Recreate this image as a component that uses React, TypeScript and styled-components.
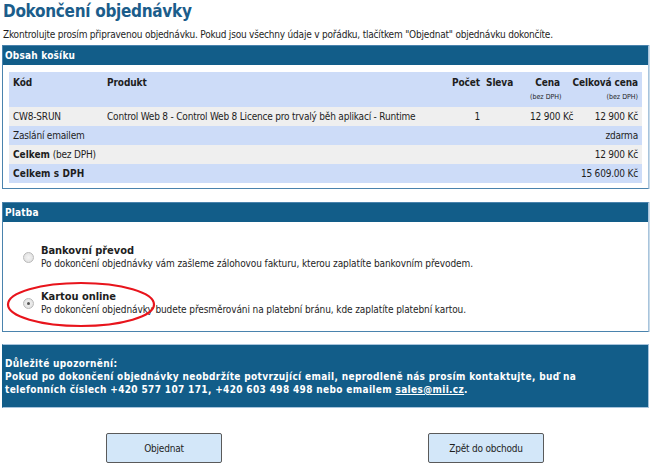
import styled, { createGlobalStyle } from "styled-components";

const GlobalStyle = createGlobalStyle`
  html, body {
    margin: 0;
    padding: 0;
    background: #ffffff;
  }
  body {
    font-family: "DejaVu Sans Condensed", "DejaVu Sans", sans-serif;
    font-size: 10px;
    letter-spacing: -0.2px;
    color: #1e1e1e;
  }
  b {
    letter-spacing: 0;
  }
`;

const Page = styled.div`
  width: 647px;
  padding: 0 4px 0 2px;
`;

const Title = styled.h1`
  margin: 0;
  padding: 1px 0 0 1px;
  height: 25px;
  font-size: 17px;
  letter-spacing: -0.3px;
  font-weight: bold;
  color: #1b5d8b;
`;

const Intro = styled.p`
  margin: 0;
  padding: 3px 0 0 1px;
  height: 16px;
`;

const Panel = styled.section<{ $gap?: number }>`
  margin-top: ${(p) => p.$gap ?? 0}px;
  border: 1px solid #4a83ad;
  border-right-color: #a8c4dc;
  box-shadow: 1px 0 0 #c9dbe9;
`;

const PanelHeader = styled.h2`
  margin: 0;
  height: 19px;
  line-height: 19px;
  padding-left: 2px;
  background: #125d89;
  color: #ffffff;
  font-size: 10px;
  letter-spacing: 0.2px;
  font-weight: bold;
`;

const PanelBody = styled.div`
  padding: 7px 6px 5px 6px;
`;

const Table = styled.table`
  width: 100%;
  border-collapse: collapse;
  table-layout: fixed;
`;

const Col = styled.col<{ $w?: number }>`
  width: ${(p) => (p.$w ? `${p.$w}px` : "auto")};
`;

const Th = styled.th<{ $align?: string; $pl?: number }>`
  background: #cddcf8;
  text-align: ${(p) => p.$align ?? "left"};
  font-weight: bold;
  letter-spacing: -0.1px;
  padding: 5px 4px 0 ${(p) => p.$pl ?? 4}px;
  height: 14px;
  vertical-align: top;
  white-space: nowrap;
`;

const SubTh = styled.th`
  background: #cddcf8;
  text-align: right;
  font-weight: normal;
  font-size: 7px;
  letter-spacing: 0;
  padding: 2px 4px 6px 4px;
  white-space: nowrap;
`;

const Row = styled.tr<{ $tone: "gray" | "blue" }>`
  background: ${(p) => (p.$tone === "gray" ? "#efefef" : "#cddcf8")};
`;

const Td = styled.td<{ $align?: string; $bold?: boolean }>`
  height: 19px;
  padding: 0 4px;
  text-align: ${(p) => p.$align ?? "left"};
  font-weight: ${(p) => (p.$bold ? "bold" : "normal")};
  letter-spacing: ${(p) => (p.$bold ? "0.1px" : "-0.2px")};
  white-space: nowrap;
`;

const PayBody = styled.div`
  position: relative;
  padding: 22px 6px 15px 20px;
  display: flex;
  flex-direction: column;
  gap: 20px;
`;

const Option = styled.label`
  display: flex;
  align-items: center;
  gap: 7px;
`;

const Radio = styled.span<{ $checked?: boolean }>`
  flex: none;
  width: 9px;
  height: 9px;
  border-radius: 50%;
  border: 1px solid #b9b9b9;
  background: radial-gradient(circle, #f4f4f4 0%, #dcdcdc 100%);
  display: flex;
  align-items: center;
  justify-content: center;

  &::after {
    content: "";
    width: 3px;
    height: 3px;
    border-radius: 50%;
    background: ${(p) => (p.$checked ? "#555555" : "transparent")};
  }
`;

const OptionText = styled.div`
  display: flex;
  flex-direction: column;
  line-height: 13px;
  letter-spacing: -0.1px;
`;

const OptionName = styled.span`
  font-weight: bold;
  font-size: 11px;
  letter-spacing: -0.05px;
`;

const Ellipse = styled.svg`
  position: absolute;
  left: 3px;
  top: 59px;
  width: 150px;
  height: 47px;
  overflow: visible;
  pointer-events: none;
`;

const Notice = styled.div`
  margin-top: 12px;
  background: #125d89;
  border: 1px solid #a8c4dc;
  border-left-color: #125d89;
  color: #ffffff;
  font-weight: bold;
  letter-spacing: 0.35px;
  padding: 12px 6px 11px 2px;
  line-height: 13px;
`;

const NoticeLink = styled.a`
  color: #ffffff;
  text-decoration: underline;
`;

const Buttons = styled.div`
  display: grid;
  grid-template-columns: 116px 116px;
  justify-content: space-between;
  padding: 25px 105px 0 104px;
`;

const Button = styled.button`
  height: 30px;
  background: #d3e7f9;
  border: 1px solid #5a5a5a;
  border-radius: 2px;
  font-family: inherit;
  font-size: 10px;
  letter-spacing: -0.2px;
  color: #1e1e1e;
`;

const items = [
  {
    code: "CW8-SRUN",
    name: "Control Web 8 - Control Web 8 Licence pro trvalý běh aplikací - Runtime",
    qty: 1,
    price: "12 900 Kč",
    total: "12 900 Kč",
  },
];

export default function App() {
  return (
    <Page>
      <GlobalStyle />
      <Title>Dokončení objednávky</Title>
      <Intro>
        Zkontrolujte prosím připravenou objednávku. Pokud jsou všechny údaje v pořádku, tlačítkem
        "Objednat" objednávku dokončíte.
      </Intro>

      <Panel>
        <PanelHeader>Obsah košíku</PanelHeader>
        <PanelBody>
          <Table>
            <colgroup>
              <Col $w={94} />
              <Col />
              <Col $w={46} />
              <Col $w={42} />
              <Col $w={38} />
              <Col $w={78} />
            </colgroup>
            <thead>
              <tr>
                <Th>Kód</Th>
                <Th>Produkt</Th>
                <Th $align="right">Počet</Th>
                <Th $pl={2}>Sleva</Th>
                <Th $align="right">Cena</Th>
                <Th $align="right">Celková cena</Th>
              </tr>
              <tr>
                <SubTh />
                <SubTh />
                <SubTh />
                <SubTh />
                <SubTh>(bez DPH)</SubTh>
                <SubTh>(bez DPH)</SubTh>
              </tr>
            </thead>
            <tbody>
              {items.map((it) => (
                <Row key={it.code} $tone="gray">
                  <Td>{it.code}</Td>
                  <Td>{it.name}</Td>
                  <Td $align="right">{it.qty}</Td>
                  <Td></Td>
                  <Td $align="right">{it.price}</Td>
                  <Td $align="right">{it.total}</Td>
                </Row>
              ))}
              <Row $tone="blue">
                <Td colSpan={5}>Zaslání emailem</Td>
                <Td $align="right">zdarma</Td>
              </Row>
              <Row $tone="gray">
                <Td colSpan={5}>
                  <b>Celkem</b> (bez DPH)
                </Td>
                <Td $align="right">12 900 Kč</Td>
              </Row>
              <Row $tone="blue">
                <Td colSpan={5} $bold>
                  Celkem s DPH
                </Td>
                <Td $align="right">15 609.00 Kč</Td>
              </Row>
            </tbody>
          </Table>
        </PanelBody>
      </Panel>

      <Panel $gap={13}>
        <PanelHeader>Platba</PanelHeader>
        <PayBody>
          <Option>
            <Radio />
            <OptionText>
              <OptionName>Bankovní převod</OptionName>
              <span>
                Po dokončení objednávky vám zašleme zálohovou fakturu, kterou zaplatíte bankovním
                převodem.
              </span>
            </OptionText>
          </Option>
          <Option>
            <Radio $checked />
            <OptionText>
              <OptionName>Kartou online</OptionName>
              <span>
                Po dokončení objednávky budete přesměrováni na platební bránu, kde zaplatíte platební
                kartou.
              </span>
            </OptionText>
          </Option>
          <Ellipse viewBox="0 0 150 47">
            <ellipse cx="75" cy="23.5" rx="73" ry="21.5" fill="none" stroke="#e8141c" strokeWidth="2.2" />
          </Ellipse>
        </PayBody>
      </Panel>

      <Notice>
        Důležité upozornění:
        <br />
        Pokud po dokončení objednávky neobdržíte potvrzující email, neprodleně nás prosím
        kontaktujte, buď na
        <br />
        telefonních číslech +420 577 107 171, +420 603 498 498 nebo emailem{" "}
        <NoticeLink href="#">sales@mii.cz</NoticeLink>.
      </Notice>

      <Buttons>
        <Button>Objednat</Button>
        <Button>Zpět do obchodu</Button>
      </Buttons>
    </Page>
  );
}
